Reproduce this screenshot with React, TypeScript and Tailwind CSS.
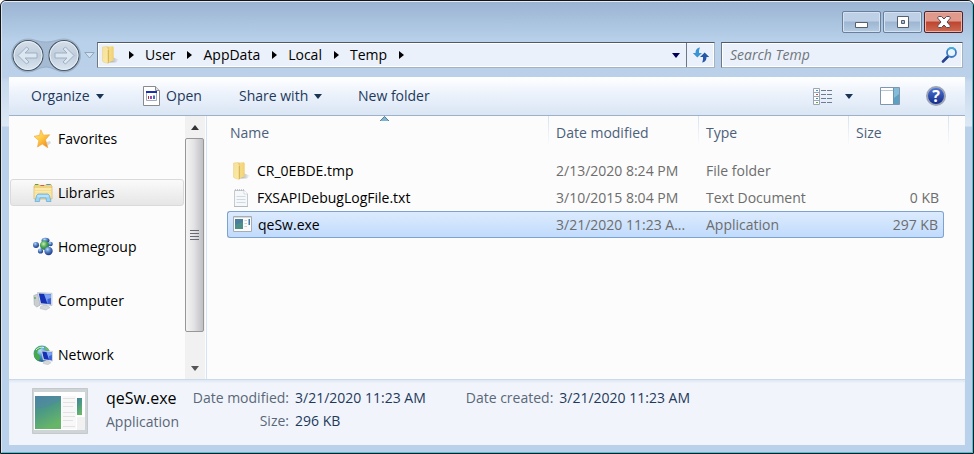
import React from 'react';

const FONT = "font-['Open_Sans','Noto_Sans',sans-serif]";

function Folder({ className = '' }: { className?: string }) {
  return (
    <svg viewBox="0 0 18 20" className={`h-5 w-[18px] shrink-0 ${className}`} aria-hidden="true">
      <defs>
        <linearGradient id="fo" x1="0" x2="1">
          <stop offset="0" stopColor="#d9b457" />
          <stop offset=".4" stopColor="#f6dc88" />
          <stop offset="1" stopColor="#f0cf72" />
        </linearGradient>
        <linearGradient id="ff" x1="0" y1="0" x2="1" y2="1">
          <stop offset="0" stopColor="#f5e09a" />
          <stop offset="1" stopColor="#fbeaa6" />
        </linearGradient>
        <linearGradient id="fs" x1="0" x2="1">
          <stop offset="0" stopColor="#9fa5ad" />
          <stop offset="1" stopColor="#9fa5ad" stopOpacity=".1" />
        </linearGradient>
      </defs>
      <path d="M10 11.500l7.500 3-2.500 3H8z" fill="url(#fs)" />
      <path d="M6 1.800l6-.6.700 1.300v13L6 18z" fill="url(#fo)" />
      <path d="M1.500 2L6 1.500l1.300 3V18.500l-5-1.500-.8-1z" fill="url(#ff)" stroke="#e8cd7c" strokeWidth=".5" />
      <path d="M7.300 5v13" stroke="#cfa848" strokeWidth=".8" />
    </svg>
  );
}

function Star() {
  return (
    <svg viewBox="0 0 20 20" className="size-5" aria-hidden="true">
      <defs>
        <linearGradient id="st" x1="0" y1="0" x2=".8" y2="1">
          <stop offset="0" stopColor="#ffe98c" />
          <stop offset=".5" stopColor="#ffcb45" />
          <stop offset="1" stopColor="#f28a1e" />
        </linearGradient>
      </defs>
      <path d="M12 13.500l5-1.500 1 2-4 3z" fill="#aaa" opacity=".4" />
      <path d="M7.800.8l2.700 5.400 6.200-.5-4.200 5.100 2.300 7.900-5.600-3.600-4.700 2.900 1.300-6.400L1 7.300l5.500-1z" fill="url(#st)" stroke="#f0a23c" strokeWidth=".6" strokeLinejoin="round" />
    </svg>
  );
}

function Libraries() {
  return (
    <svg viewBox="0 0 20 20" className="size-5" aria-hidden="true">
      <path d="M1 3.500l1-2h4l1 1h5l1-1h5l1 2V16H1z" fill="#f0d27c" stroke="#d1ab52" strokeWidth=".6" />
      <path d="M2 1.500h3" stroke="#4aa84c" strokeWidth="1.200" />
      <path d="M7.500 2.500h3.500" stroke="#d75a45" strokeWidth="1.200" />
      <path d="M13.500 1.500h4" stroke="#4c95d7" strokeWidth="1.200" />
      <path d="M1.500 5h17v10.500h-17z" fill="#fbe9ac" />
      <path d="M2 7.500h16M2 10h16" stroke="#f3d88a" strokeWidth=".8" />
      <path d="M2 18.500l1.500-6 1.500-1.500h10l1.500 1.500 1.500 6h-4.500l-.5-3.500h-6l-.500 3.500z" fill="#9ed3f1" stroke="#5fa9d6" strokeWidth=".7" />
      <path d="M4.500 13h11" stroke="#d5effc" />
    </svg>
  );
}

function Homegroup() {
  return (
    <svg viewBox="0 0 20 20" className="size-5" aria-hidden="true">
      <defs>
        <radialGradient id="bl" cx=".38" cy=".3" r=".65">
          <stop offset="0" stopColor="#b9d8fb" />
          <stop offset=".5" stopColor="#5583c8" />
          <stop offset="1" stopColor="#24428d" />
        </radialGradient>
        <radialGradient id="gr" cx=".4" cy=".35" r=".65">
          <stop offset="0" stopColor="#c5f0b8" />
          <stop offset=".5" stopColor="#52ac56" />
          <stop offset="1" stopColor="#24733a" />
        </radialGradient>
      </defs>
      <ellipse cx="12.500" cy="3.500" rx="4" ry="2.700" fill="url(#bl)" />
      <circle cx="3" cy="8" r="3" fill="url(#bl)" />
      <circle cx="17.500" cy="7" r="2.300" fill="url(#bl)" />
      <circle cx="11.500" cy="8.300" r="4.600" fill="url(#gr)" />
      <circle cx="7.500" cy="14" r="2.600" fill="url(#bl)" />
      <circle cx="15.500" cy="14" r="4.200" fill="url(#bl)" />
    </svg>
  );
}

function Screen() {
  return (
    <g>
      <path d="M8 15l5-1 4 2.500-4 2.500-6-1.500z" fill="#d5d9dd" stroke="#b2b7bd" strokeWidth=".5" />
      <path d="M4.500 1.500l14.500.8v12.200L7 13.200z" fill="#dfe6ee" stroke="#a9b3bf" strokeWidth=".6" />
      <path d="M5.800 2.600l12.200.7v10L8 12.200z" fill="#1430b4" />
      <path d="M11 2.900l7 .4v10l-3.500-.5z" fill="#7da2f0" />
      <path d="M14.500 8l3.500-1v6.300l-3.500-.5z" fill="#3c62d6" />
    </g>
  );
}

function Computer() {
  return (
    <svg viewBox="0 0 20 20" className="size-5" aria-hidden="true">
      <path d="M.8 4.500l4-1.500 2.500 11-3.500 2-2.500-2z" fill="#c9ced3" stroke="#a1a7ad" strokeWidth=".6" />
      <path d="M2 6v2" stroke="#47a948" strokeWidth="1.200" />
      <Screen />
    </svg>
  );
}

function Network() {
  return (
    <svg viewBox="0 0 20 20" className="size-5" aria-hidden="true">
      <defs>
        <radialGradient id="gl" cx=".4" cy=".3" r=".7">
          <stop offset="0" stopColor="#b5e3f5" />
          <stop offset=".5" stopColor="#4596cb" />
          <stop offset="1" stopColor="#1f5c93" />
        </radialGradient>
      </defs>
      <circle cx="8.800" cy="8.800" r="8.200" fill="url(#gl)" />
      <path d="M1.500 6C3 2.500 6 .8 9 1l-1 2.500-3 1.500-1 3 3 2.500L6.500 15l-1.500 1C2 14 0 10.500 1.500 6z" fill="#48a94b" />
      <path d="M11 1l4 2.500 1.500 2.500-4-1z" fill="#6dbf5c" />
      <path d="M3 5c2-2.500 5-3.300 8-2.500" stroke="#e5f8ea" strokeWidth=".9" fill="none" />
      <g transform="translate(4.500 4.500) scale(.8)"><Screen /></g>
    </svg>
  );
}

function TextFile() {
  return (
    <svg viewBox="0 0 18 20" className="h-5 w-[18px]" aria-hidden="true">
      <path d="M2.500 2.500h10l3 3v13h-13z" fill="#f5f7f9" stroke="#c5cacf" />
      <path d="M3 2h9" stroke="#b1b7bd" strokeWidth="1.500" strokeDasharray="1 1" />
      <path d="M4.500 8.500h9M4.500 11.500h9M4.500 14.500h9" stroke="#cddae6" />
      <path d="M2 18.500h14" stroke="#b3b9bf" />
      <path d="M12 2v4h4" fill="#fff" stroke="#c8cdd2" strokeWidth=".7" />
    </svg>
  );
}

function AppIcon() {
  return (
    <svg viewBox="0 0 19 17" className="h-[17px] w-[19px]" aria-hidden="true">
      <path d="M.5.5h18v15H.5z" fill="#fafafa" stroke="#a7acb1" />
      <path d="M1 1h17v1H1z" fill="#d6dadd" />
      <path d="M2 3h8v10H2z" fill="#4b8f86" />
      <path d="M2 3h8v3L2 9z" fill="#4a7f9c" />
      <path d="M11.500 4.500h2.500M11.500 7.500h2.500M11.500 10.500h2.500" stroke="#cfcfcf" />
      <path d="M15.500 3h1.500v6h-1.500z" fill="#4379a6" />
    </svg>
  );
}

function BigApp() {
  return (
    <svg viewBox="0 0 56 46" className="h-[46px] w-14 shrink-0" aria-hidden="true">
      <defs>
        <linearGradient id="ba" x1="0" y1="0" x2=".4" y2="1">
          <stop offset="0" stopColor="#467f9e" />
          <stop offset=".5" stopColor="#4c9a84" />
          <stop offset="1" stopColor="#66b568" />
        </linearGradient>
      </defs>
      <path d="M.5.5h55v45H.5z" fill="#cfd4d7" stroke="#c3c9cd" />
      <path d="M2 4h51v38H2z" fill="#fff" />
      <path d="M3 8h26v33H3z" fill="url(#ba)" />
      <path d="M3 20c10 0 18-3 26-8V8H3z" fill="#5288a8" opacity=".5" />
      <path d="M30 8h14v33H30z" fill="#f8f8f8" />
      <path d="M31 10.500h12M31 14.500h12M31 18.500h10M31 24.500h12M31 28.500h12M31 32.500h10M31 38.500h12" stroke="#e2e2e2" />
      <path d="M45 10h5v17h-5z" fill="url(#ba)" />
      <path d="M45 29h8v13h-8z" fill="#f0f1f0" />
    </svg>
  );
}

function NavCircles() {
  return (
    <div className="relative flex h-9 w-[70px] shrink-0 items-center justify-between px-[2px]">
      <svg viewBox="0 0 70 36" className="absolute inset-0 h-9 w-[70px]" aria-hidden="true">
        <defs>
          <linearGradient id="nc" x1="0" y1="0" x2="0" y2="1">
            <stop offset="0" stopColor="#d6dfe9" />
            <stop offset=".5" stopColor="#bfcddc" />
            <stop offset="1" stopColor="#dbe6f1" />
          </linearGradient>
        </defs>
        <path d="M17 2c6 0 10 3 18 3s12-3 18-3a16.500 16.500 0 010 33c-7 0-11-5-18-5s-11 5-18 5a16.500 16.500 0 010-33z" fill="#a5bbd3" stroke="#93a9c2" strokeWidth=".8" />
        <g fill="url(#nc)" stroke="#485665" strokeWidth="1.100">
          <circle cx="17" cy="18.500" r="15" />
          <circle cx="53" cy="18.500" r="15" />
        </g>
        <g fill="none" stroke="#e8eff6" strokeWidth="1">
          <circle cx="17" cy="18.500" r="14" />
          <circle cx="53" cy="18.500" r="14" />
        </g>
        <g fill="#dde7f1" stroke="#9fb0c2" strokeWidth="1" strokeLinejoin="round">
          <path d="M7 18.500l8.500-8.500 2.500 2-4 4h12v5H14l4 4-2.500 2z" />
          <path d="M63 18.500L54.500 10 52 12l4 4H44v5h12l-4 4 2.500 2z" />
        </g>
      </svg>
      <button aria-label="Back" className="relative size-8 rounded-full" />
      <button aria-label="Forward" className="relative size-8 rounded-full" />
    </div>
  );
}

function Down({ className = 'text-[#1b3455]' }: { className?: string }) {
  return (
    <svg viewBox="0 0 8 5" className={`h-[5px] w-2 shrink-0 ${className}`} aria-hidden="true">
      <path d="M0 0h8L4 5z" fill="currentColor" />
    </svg>
  );
}

const crumbs = ['User', 'AppData', 'Local', 'Temp'];

function Chevron() {
  return (
    <svg viewBox="0 0 5 8" className="h-2 w-[5px] shrink-0" aria-hidden="true">
      <path d="M0 0l5 4-5 4z" fill="#000" />
    </svg>
  );
}

const places = [
  { name: 'Favorites', icon: <Star /> },
  { name: 'Libraries', icon: <Libraries />, active: true },
  { name: 'Homegroup', icon: <Homegroup /> },
  { name: 'Computer', icon: <Computer /> },
  { name: 'Network', icon: <Network /> },
];

const files = [
  { name: 'CR_0EBDE.tmp', date: '2/13/2020 8:24 PM', type: 'File folder', size: '', icon: <Folder /> },
  { name: 'FXSAPIDebugLogFile.txt', date: '3/10/2015 8:04 PM', type: 'Text Document', size: '0 KB', icon: <TextFile /> },
  { name: 'qeSw.exe', date: '3/21/2020 11:23 A...', type: 'Application', size: '297 KB', icon: <AppIcon />, selected: true },
];

const caption =
  'flex h-[22px] w-[39px] items-center justify-center rounded-[2px] border border-[#6a7f99] bg-linear-to-b from-[#bdd0e5] from-45% via-[#9db6d1] via-50% to-[#b4cbe3] shadow-[inset_0_0_0_1px_#d5e2f0]';

const field =
  'flex h-[26px] items-center border border-[#a5b2c2] border-t-[#4e5a6a] border-l-[#6c7887] bg-[#ebf1fa] shadow-[inset_0_0_0_1px_white]';

export default function App() {
  return (
    <div className={`flex min-h-screen flex-col overflow-hidden rounded-t-md border border-[#141414] bg-[#b9d1ea] text-sm leading-5 ${FONT}`}>
      <div className="flex flex-1 flex-col rounded-t-[5px] border border-t-[#e3edf7] border-r-[#37c9e4] border-b-[#37c9e4] border-l-[#d9e6f3] bg-[linear-gradient(#9ab4d2,#b9d1ea_40px,#bbd0e9_75px,#c8daee_80px,#dce8f5_124px,#b9d1ea_125px)] px-[7px] pb-[7px]">
        <header className="pr-[2px] pl-[2px]">
          <div className="flex h-[31px] items-end justify-end gap-[2px]">
            <button aria-label="Minimize" className={caption}>
              <svg viewBox="0 0 14 12" className="h-3 w-[14px]"><path d="M.5 6.500h12v5H.5z" fill="#fff" stroke="#555f6e" /></svg>
            </button>
            <button aria-label="Maximize" className={caption}>
              <svg viewBox="0 0 14 12" className="h-3 w-[14px]"><path d="M1.500.5h11v11h-11zM5.500 4.500v3h3v-3z" fill="#fff" fillRule="evenodd" stroke="#555f6e" /></svg>
            </button>
            <button aria-label="Close" className="flex h-[22px] w-[39px] items-center justify-center rounded-[2px] border border-[#52222c] bg-linear-to-b from-[#e09a8c] from-45% via-[#bd4430] via-50% to-[#cf6a50] shadow-[inset_0_0_0_1px_#e8b5a8]">
              <svg viewBox="0 0 14 12" className="h-3 w-[14px]"><path d="M1.500.5h3L7 3 9.500.5h3l1 1.500L10 6l3.500 4-1 1.500h-3L7 9l-2.500 2.500h-3l-1-1.500L4 6 .5 2z" fill="#fff" stroke="#5d4a50" strokeLinejoin="round" /></svg>
            </button>
          </div>
          <div className="flex h-11 items-center">
            <NavCircles />
            <button aria-label="Recent locations" className="flex w-4 justify-center">
              <svg viewBox="0 0 11 7" className="h-[7px] w-[11px]"><path d="M.8.5h9.400L5.500 6z" fill="#d5e2f0" stroke="#8ea7c2" /></svg>
            </button>
            <nav aria-label="Address" className={`min-w-0 flex-1 ${field}`}>
              <Folder className="mr-[10px] ml-[3px]" />
              <Chevron />
              {crumbs.map((name) => (
                <React.Fragment key={name}>
                  <button className="mr-3 ml-[11px] whitespace-nowrap">{name}</button>
                  <Chevron />
                </React.Fragment>
              ))}
              <button aria-label="Previous locations" className="mr-[5px] ml-auto p-px"><Down className="text-[#00005c]" /></button>
              <button aria-label="Refresh" className="flex h-6 w-7 items-center justify-center border-l border-[#6c7887]">
                <svg viewBox="0 0 18 16" className="h-4 w-[18px]">
                  <path d="M7.500.5C4.500 1.500 3.500 3 3.500 6H.8L5.300 10.500 10 6H7c0-2 0-3.500 1-5.500z" fill="#3a94d6" />
                  <path d="M10.500 15.500c3-1 4-2.500 4-5.500h2.700L12.700 5.500 8 10h3c0 2 0 3.500-.8 5.500z" fill="#2558a8" />
                </svg>
              </button>
            </nav>
            <label className={`ml-[6px] w-[242px] px-2 ${field}`}>
              <input aria-label="Search Temp" placeholder="Search Temp" className="min-w-0 flex-1 bg-transparent italic outline-none placeholder:text-[#70757d]" />
              <svg viewBox="0 0 17 16" className="-mr-1 h-4 w-[17px]" aria-hidden="true">
                <path d="M7 9.500L2 14.500" stroke="#23438f" strokeWidth="2.600" strokeLinecap="round" />
                <circle cx="10.500" cy="5.500" r="4.500" fill="#e8f5fd" stroke="#3d7ac6" strokeWidth="1.800" />
                <path d="M7 2.500a4.500 4.500 0 017 0" stroke="#3fb2e0" strokeWidth="1.800" fill="none" />
              </svg>
            </label>
          </div>
        </header>

        <div role="toolbar" aria-label="Commands" className="flex h-[39px] items-center border-b border-[#9fb0cb] bg-linear-to-b from-white via-[#eaf1fb] via-50% to-[#dae6f4] pr-[19px] pl-[22px] text-[#1e395b]">
          <button className="flex w-[112px] items-center gap-[6px]">Organize <Down /></button>
          <button className="flex w-24 items-center gap-[6px]">
            <svg viewBox="0 0 17 20" className="h-5 w-[17px]" aria-hidden="true">
              <path d="M.5.5h12l4 4v15H.5z" fill="#fff" stroke="#8a8a8a" />
              <path d="M12.500.5v4h4" fill="#ddd" stroke="#8a8a8a" />
              <path d="M3.500 5.500h10v9h-10z" fill="#fff" stroke="#a3aab8" />
              <path d="M3 5h11v2H3z" fill="#1732ae" />
              <path d="M5.500 13v-3" stroke="#b02c4b" />
              <path d="M7 10h2v3H7z" fill="#9b4bb0" />
              <path d="M10 9.500h2V13h-2z" fill="#3a6fd0" />
            </svg>
            Open
          </button>
          <button className="flex w-[119px] items-center gap-[6px]">Share with <Down /></button>
          <button>New folder</button>
          <button aria-label="Change your view" className="ml-auto flex items-center">
            <svg viewBox="0 0 20 17" className="h-[17px] w-5">
              <path d="M.5.500h6v16h-6zM.5 4.500h6M.5 8.500h6M.5 12.500h6" fill="#fff" stroke="#9aa5b5" />
              <path d="M3 2.500h2" stroke="#3f9ad0" /><path d="M3 6.500h2" stroke="#c24c39" /><path d="M3 10.500h2" stroke="#32919a" /><path d="M3 14.500h2" stroke="#70a838" />
              <path d="M8 2.500h11M8 6.500h11M8 10.500h11M8 14.500h11" stroke="#6d7c90" strokeDasharray="5 1" />
            </svg>
          </button>
          <button aria-label="More views" className="ml-3"><Down /></button>
          <button aria-label="Show the preview pane" className="ml-[27px]">
            <svg viewBox="0 0 20 18" className="h-[18px] w-5"><path d="M.5.500h19v17H.5z" fill="#fff" stroke="#7f97ae" /><path d="M1 3.500h13" stroke="#b7c7d5" /><path d="M13 1h6v16h-6z" fill="#83bcd8" /><path d="M13.500 1v16" stroke="#6894b2" /><path d="M14 11l5-4v10h-5z" fill="#5f9fc2" /></svg>
          </button>
          <button aria-label="Get help" className="ml-[26px] flex size-5 items-center justify-center rounded-full border-2 border-[#9ba4b6] bg-linear-to-b from-[#4e73d5] to-[#14298a] text-base leading-4 font-bold text-white">?</button>
        </div>

        <main className="flex flex-1 bg-[#fcfcfc]">
          <nav aria-label="Places" className="w-44 shrink-0 pt-[9px] pl-[1px]">
            <ul className="flex flex-col gap-[27px]">
              {places.map((p) => (
                <li key={p.name}>
                  <button className={`flex h-[27px] w-[174px] items-center gap-[5px] rounded-[3px] border pl-[22px] ${p.active ? 'border-[#dadada] bg-linear-to-b from-[#fafafa] to-[#e6e6e6]' : 'border-transparent'}`}>
                    {p.icon}
                    {p.name}
                  </button>
                </li>
              ))}
            </ul>
          </nav>
          <div className="flex w-5 shrink-0 flex-col bg-[#f1f1f1] pr-px" aria-hidden="true">
            <div className="flex h-[22px] items-center justify-center"><svg viewBox="0 0 8 5" className="h-[5px] w-2"><path d="M0 5h8L4 0z" fill="#333" /></svg></div>
            <div className="flex flex-1 flex-col items-center justify-center gap-[2px] rounded-[2px] border border-[#979797] bg-linear-to-r from-[#f4f4f4] via-[#e4e4e6] via-45% to-[#bfc0c4]">
              {[0, 1, 2, 3].map((i) => <span key={i} className="h-px w-[9px] bg-[#666b73]" />)}
            </div>
            <div className="flex h-[47px] items-end justify-center pb-2"><Down className="text-[#555]" /></div>
          </div>
          <div className="ml-px min-w-0 flex-1 border-l border-[#d6e5f5] pl-5">
            <table className="w-full table-fixed border-separate border-spacing-0 text-left">
              <colgroup><col /><col className="w-[150px]" /><col className="w-[150px]" /><col className="w-[100px]" /><col className="w-[17px]" /></colgroup>
              <thead>
                <tr className="h-[34px] text-[#4c607a] [&>th]:pb-0 [&>th]:font-normal">
                  <th className="relative pl-[3px]">
                    Name
                    <svg viewBox="0 0 9 5" className="absolute top-0 left-[153px] h-[5px] w-[9px]" aria-hidden="true"><path d="M0 5l4.500-5L9 5z" fill="#7fb5d2" /><path d="M0 5L4.500.5 9 5" fill="none" stroke="#3f6f8c" strokeWidth=".8" /></svg>
                  </th>
                  {['Date modified', 'Type', 'Size'].map((h) => (
                    <th key={h} className="bg-[linear-gradient(#d3e3f4,#fcfcfc)] bg-[length:1px_30px] bg-left-top bg-no-repeat pl-2">{h}</th>
                  ))}
                  <th className="bg-[linear-gradient(#d3e3f4,#fcfcfc)] bg-[length:1px_30px] bg-left-top bg-no-repeat" />
                </tr>
                <tr aria-hidden="true"><td className="h-[7px]" /></tr>
              </thead>
            </table>
            <table className="w-[calc(100%-21px)] table-fixed border-separate border-spacing-0 text-left">
              <colgroup><col /><col className="w-[150px]" /><col className="w-[150px]" /><col className="w-24" /></colgroup>
              <tbody>
                {files.map((f) => (
                  <tr key={f.name} className={`h-[27px] text-[#6d6d6d] ${f.selected ? '[&>td]:border-y [&>td]:border-[#7da2ce] [&>td]:bg-linear-to-b [&>td]:from-[#dcebfd] [&>td]:to-[#c1dbfc] [&>td:first-child]:rounded-l-[3px] [&>td:first-child]:border-l [&>td:last-child]:rounded-r-[3px] [&>td:last-child]:border-r' : ''}`}>
                    <td className="pl-[4px] text-black"><span className="flex items-center gap-[6px]"><span className="flex w-5 justify-center">{f.icon}</span>{f.name}</span></td>
                    <td className="pl-2 whitespace-nowrap">{f.date}</td>
                    <td className="pl-2">{f.type}</td>
                    <td className="pr-[5px] text-right">{f.size}</td>
                  </tr>
                ))}
              </tbody>
            </table>
          </div>
        </main>

        <footer className="flex h-[66px] items-start border-t border-[#cbdaea] bg-[#f1f5fb] pt-[8px] pl-[23px] text-[#5a6779] shadow-[inset_0_2px_2px_#e0e9f4]">
          <BigApp />
          <div className="ml-[18px] w-[83px]">
            <h1 className="text-base leading-5 text-black">qeSw.exe</h1>
            <p className="pt-1">Application</p>
          </div>
          <dl className="grid grid-cols-[100px_auto] gap-x-[6px] gap-y-[3px]">
            <dt className="text-right">Date modified:</dt><dd className="text-[#1e395b]">3/21/2020 11:23 AM</dd>
            <dt className="text-right">Size:</dt><dd className="text-[#1e395b]">296 KB</dd>
          </dl>
          <dl className="ml-10 flex gap-[6px]">
            <dt>Date created:</dt><dd className="text-[#1e395b]">3/21/2020 11:23 AM</dd>
          </dl>
        </footer>
      </div>
    </div>
  );
}
